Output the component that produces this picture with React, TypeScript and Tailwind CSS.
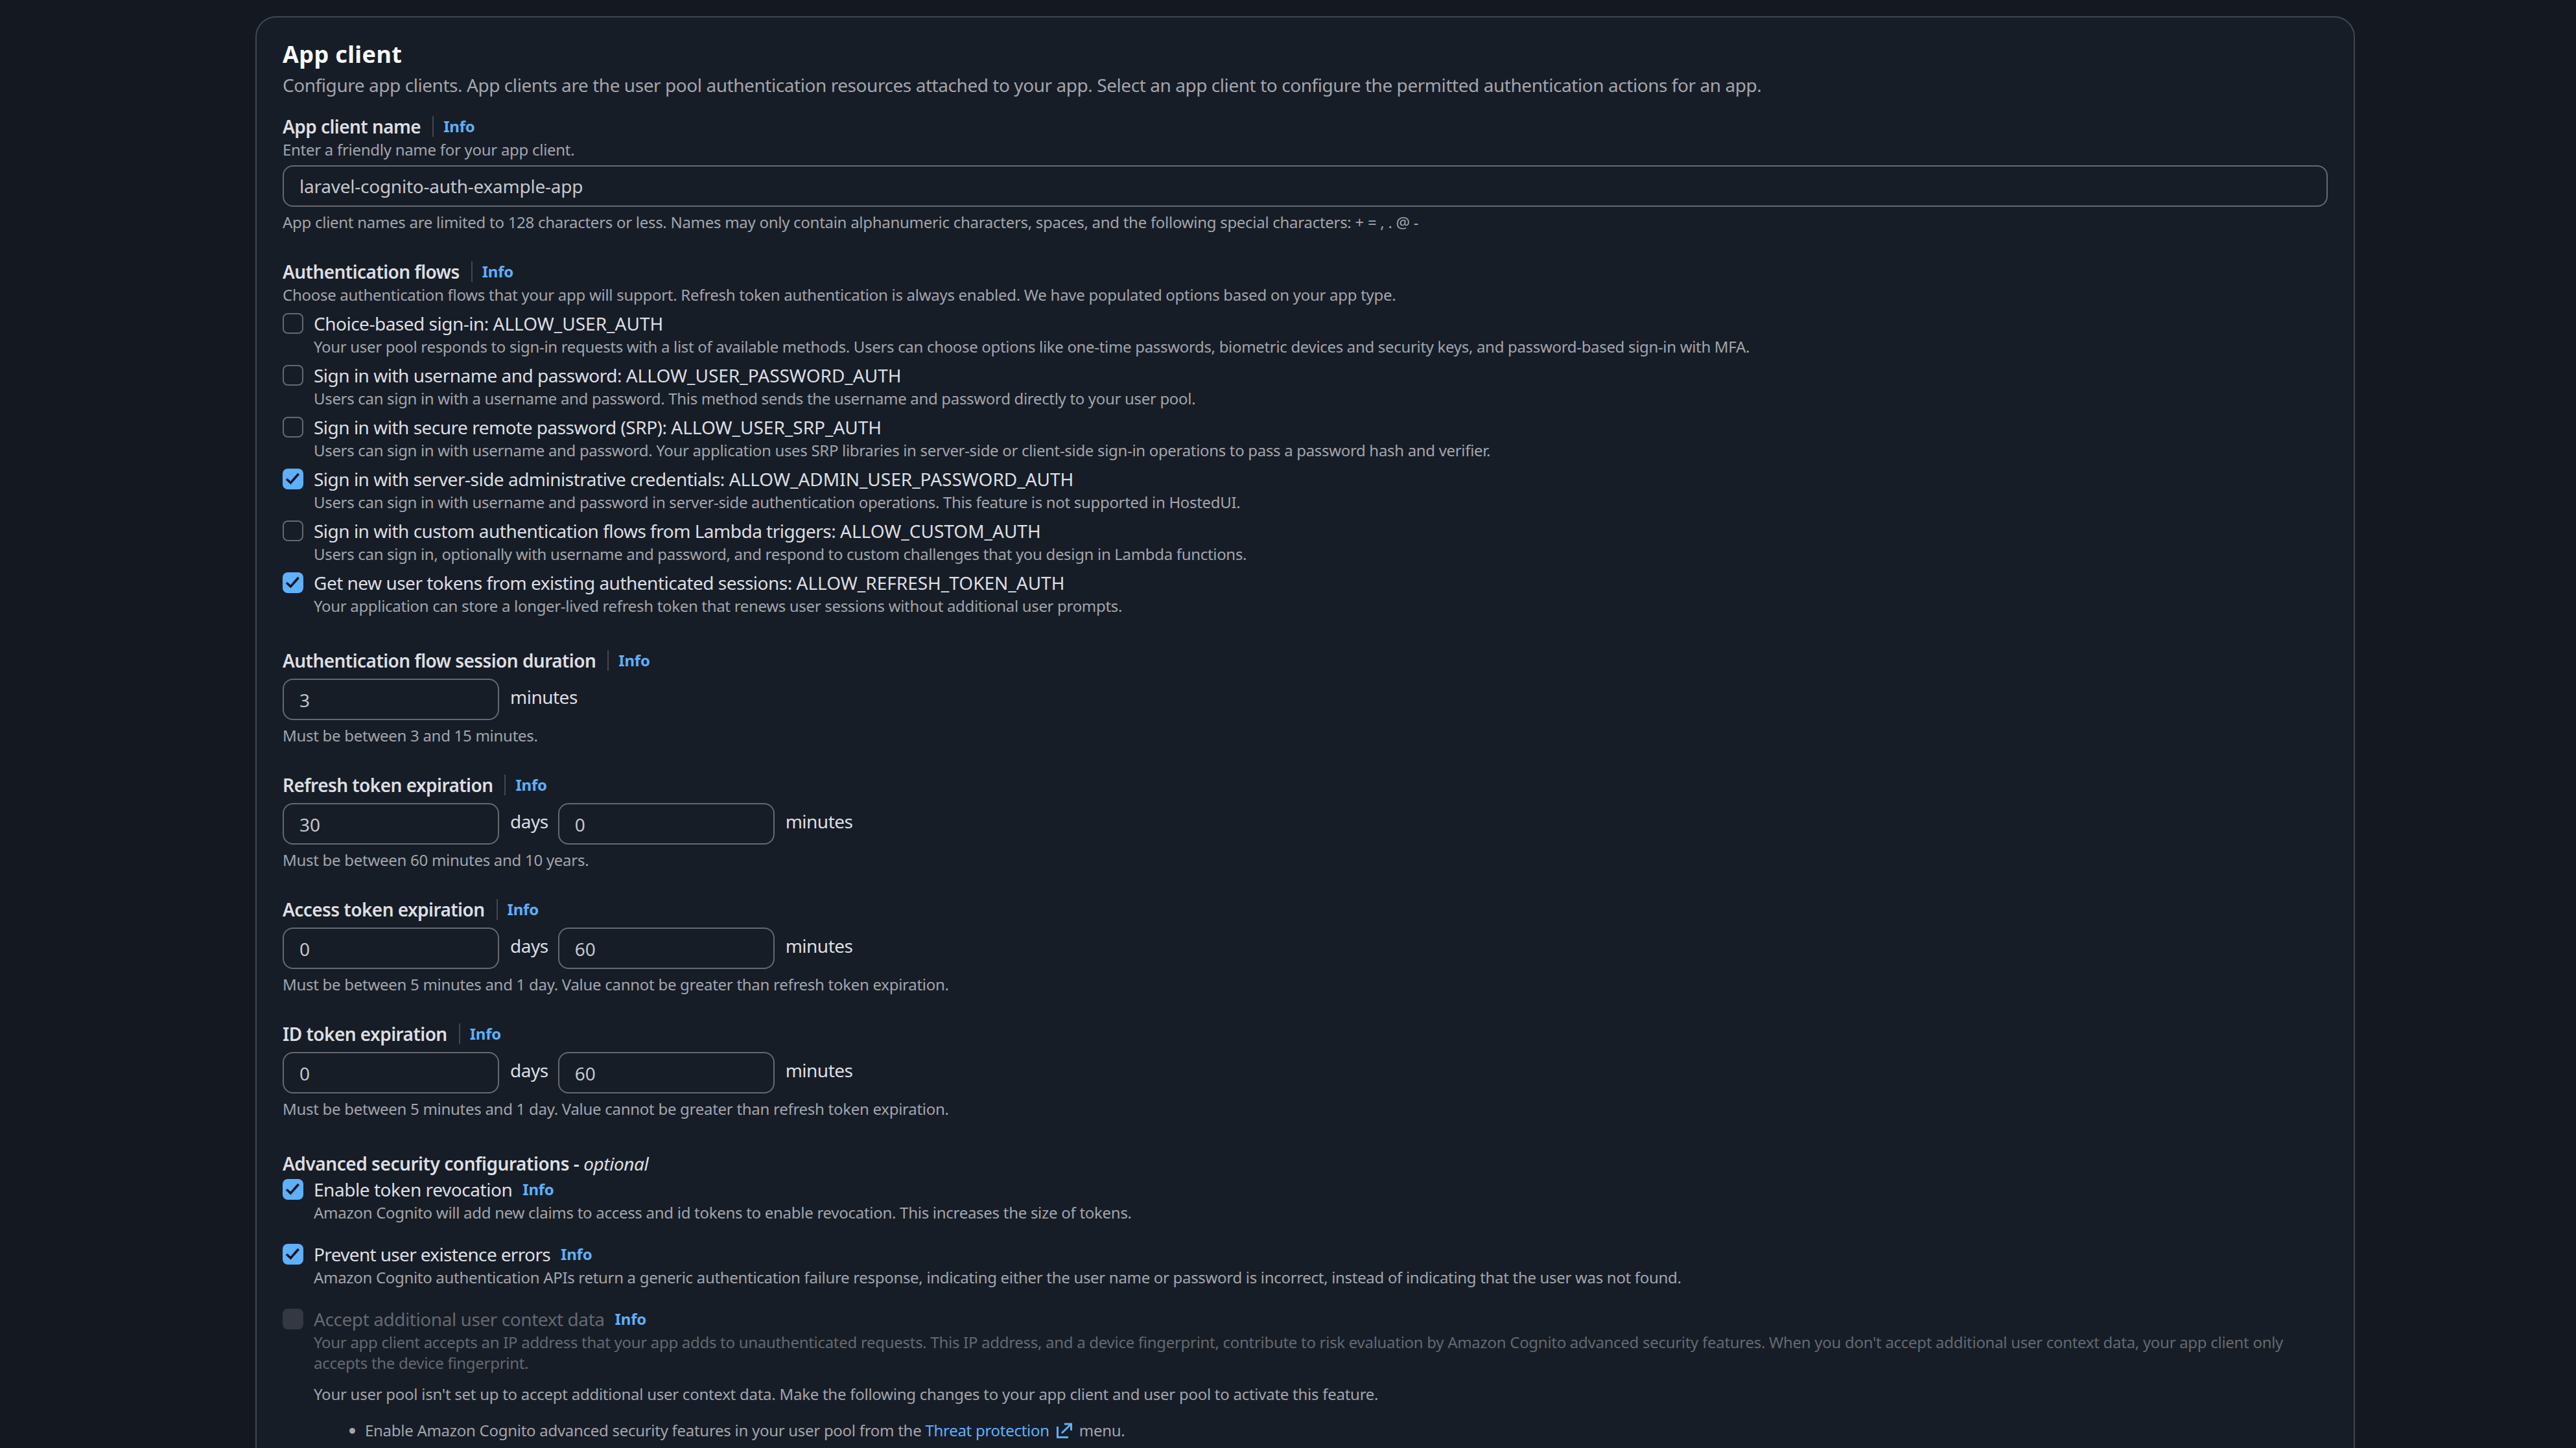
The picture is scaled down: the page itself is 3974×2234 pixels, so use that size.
const InfoLink = () => <a className="text-[24px] leading-[32px] font-bold tracking-[-0.2px] text-[#5eb0ff]">Info</a>;

const FieldLabel = ({ children }: { children: string }) => (
  <div className="flex h-[40px] items-center">
    <span className="text-[28px] leading-[40px] font-semibold tracking-[-0.55px] text-[#dedee3]">{children}</span>
    <span className="ml-[18px] mr-[15px] h-[32px] w-[2px] bg-[#424650]" />
    <InfoLink />
  </div>
);

const Checkbox = ({ checked, disabled }: { checked?: boolean; disabled?: boolean }) => {
  if (disabled) return <span className="mt-[4px] h-[32px] w-[32px] shrink-0 rounded-[8px] bg-[#333843]" />;
  if (!checked) return <span className="mt-[4px] h-[32px] w-[32px] shrink-0 rounded-[8px] border-2 border-[#656871]" />;
  return (
    <span className="mt-[4px] h-[32px] w-[32px] shrink-0 rounded-[8px] bg-[#5eb0ff]">
      <svg viewBox="0 0 16 16" className="h-[32px] w-[32px]" fill="none" stroke="#0f141a" strokeWidth="1.8">
        <path d="M3 8l3.200 3 6.100-7" />
      </svg>
    </span>
  );
};

const flows = [
  { name: "Choice-based sign-in:", flow: "ALLOW_USER_AUTH", desc: "Your user pool responds to sign-in requests with a list of available methods. Users can choose options like one-time passwords, biometric devices and security keys, and password-based sign-in with MFA." },
  { name: "Sign in with username and password:", flow: "ALLOW_USER_PASSWORD_AUTH", desc: "Users can sign in with a username and password. This method sends the username and password directly to your user pool." },
  { name: "Sign in with secure remote password (SRP):", flow: "ALLOW_USER_SRP_AUTH", desc: "Users can sign in with username and password. Your application uses SRP libraries in server-side or client-side sign-in operations to pass a password hash and verifier." },
  { name: "Sign in with server-side administrative credentials:", flow: "ALLOW_ADMIN_USER_PASSWORD_AUTH", desc: "Users can sign in with username and password in server-side authentication operations. This feature is not supported in HostedUI.", checked: true },
  { name: "Sign in with custom authentication flows from Lambda triggers:", flow: "ALLOW_CUSTOM_AUTH", desc: "Users can sign in, optionally with username and password, and respond to custom challenges that you design in Lambda functions." },
  { name: "Get new user tokens from existing authenticated sessions:", flow: "ALLOW_REFRESH_TOKEN_AUTH", desc: "Your application can store a longer-lived refresh token that renews user sessions without additional user prompts.", checked: true },
];

const NumberInput = ({ value }: { value: string }) => (
  <input
    readOnly
    value={value}
    className="h-[64px] w-[334px] rounded-[16px] border-2 border-[#656871] bg-transparent px-[24px] pt-[2px] text-[28px] text-[#c6c6cd] outline-none"
  />
);

const Unit = ({ children }: { children: string }) => (
  <span className="ml-[17px] text-[28px] leading-[56px] tracking-[-0.5px] text-[#dedee3]">{children}</span>
);

const TokenField = ({ label, days, minutes, hint }: { label: string; days: string; minutes: string; hint: string }) => (
  <div className="mt-[40px]">
    <FieldLabel>{label}</FieldLabel>
    <div className="mt-[8px] flex">
      <NumberInput value={days} />
      <Unit>days</Unit>
      <span className="ml-[15px] flex">
        <NumberInput value={minutes} />
      </span>
      <Unit>minutes</Unit>
    </div>
    <div className="mt-[8px] text-[24px] leading-[32px] tracking-[-0.28px] text-[#a4a4ad]">{hint}</div>
  </div>
);

export default function App() {
  return (
    <div className="h-[2234px] overflow-hidden bg-[#141820] pl-[394px] pr-[341px] pt-[25px] font-['Noto_Sans',sans-serif]">
      <div className="h-[2400px] rounded-[32px] border-2 border-[#424650] bg-[#161d26] px-[40px] pt-[35px]">
        <h2 className="text-[36px] leading-[44px] font-bold tracking-[0.38px] text-[#f9f9fa]">App client</h2>
        <p className="mt-[5px] text-[28px] leading-[40px] tracking-[-0.44px] text-[#a4a4ad]">
          Configure app clients. App clients are the user pool authentication resources attached to your app. Select an app client to configure the permitted authentication actions for an app.
        </p>

        <div className="mt-[24px]">
          <FieldLabel>App client name</FieldLabel>
          <div className="text-[24px] leading-[32px] tracking-[-0.28px] text-[#a4a4ad]">Enter a friendly name for your app client.</div>
          <input
            readOnly
            value="laravel-cognito-auth-example-app"
            className="mt-[8px] block h-[64px] w-full rounded-[16px] border-2 border-[#656871] bg-transparent px-[24px] text-[28px] tracking-[-0.24px] text-[#c6c6cd] outline-none"
          />
          <div className="mt-[8px] text-[24px] leading-[32px] tracking-[-0.28px] text-[#a4a4ad]">
            App client names are limited to 128 characters or less. Names may only contain alphanumeric characters, spaces, and the following special characters: + = , . @ -
          </div>
        </div>

        <div className="mt-[40px]">
          <FieldLabel>Authentication flows</FieldLabel>
          <div className="text-[24px] leading-[32px] tracking-[-0.28px] text-[#a4a4ad]">
            Choose authentication flows that your app will support. Refresh token authentication is always enabled. We have populated options based on your app type.
          </div>
          <div className="mt-[8px] flex flex-col gap-[8px]">
            {flows.map((item) => (
              <div key={item.flow} className="flex gap-[16px]">
                <Checkbox checked={item.checked} />
                <div>
                  <div className="text-[28px] leading-[40px] tracking-[-0.5px] text-[#dedee3]">
                    {item.name} <span className="tracking-normal">{item.flow}</span>
                  </div>
                  <div className="text-[24px] leading-[32px] tracking-[-0.32px] text-[#a4a4ad]">{item.desc}</div>
                </div>
              </div>
            ))}
          </div>
        </div>

        <div className="mt-[48px]">
          <FieldLabel>Authentication flow session duration</FieldLabel>
          <div className="mt-[8px] flex">
            <NumberInput value="3" />
            <Unit>minutes</Unit>
          </div>
          <div className="mt-[8px] text-[24px] leading-[32px] tracking-[-0.28px] text-[#a4a4ad]">Must be between 3 and 15 minutes.</div>
        </div>

        <TokenField label="Refresh token expiration" days="30" minutes="0" hint="Must be between 60 minutes and 10 years." />
        <TokenField label="Access token expiration" days="0" minutes="60" hint="Must be between 5 minutes and 1 day. Value cannot be greater than refresh token expiration." />
        <TokenField label="ID token expiration" days="0" minutes="60" hint="Must be between 5 minutes and 1 day. Value cannot be greater than refresh token expiration." />

        <div className="mt-[48px]">
          <div className="text-[28px] leading-[40px] font-semibold tracking-[-0.45px] text-[#dedee3]">
            Advanced security configurations - <span className="font-normal italic">optional</span>
          </div>

          <div className="flex gap-[16px]">
            <Checkbox checked />
            <div>
              <div className="flex items-center gap-[16px] text-[28px] leading-[40px] tracking-[-0.45px] text-[#dedee3]">
                Enable token revocation <InfoLink />
              </div>
              <div className="text-[24px] leading-[32px] tracking-[-0.28px] text-[#a4a4ad]">
                Amazon Cognito will add new claims to access and id tokens to enable revocation. This increases the size of tokens.
              </div>
            </div>
          </div>

          <div className="mt-[28px] flex gap-[16px]">
            <Checkbox checked />
            <div>
              <div className="flex items-center gap-[16px] text-[28px] leading-[40px] tracking-[-0.65px] text-[#dedee3]">
                Prevent user existence errors <InfoLink />
              </div>
              <div className="text-[24px] leading-[32px] tracking-[-0.31px] text-[#a4a4ad]">
                Amazon Cognito authentication APIs return a generic authentication failure response, indicating either the user name or password is incorrect, instead of indicating that the user was not found.
              </div>
            </div>
          </div>

          <div className="mt-[28px] flex gap-[16px]">
            <Checkbox disabled />
            <div>
              <div className="flex items-center gap-[16px] text-[28px] leading-[40px] tracking-[-0.43px] text-[#656871]">
                Accept additional user context data <InfoLink />
              </div>
              <div className="text-[24px] leading-[32px] tracking-[-0.29px] text-[#656871]">
                Your app client accepts an IP address that your app adds to unauthenticated requests. This IP address, and a device fingerprint, contribute to risk evaluation by Amazon Cognito advanced security features. When you don't accept additional user context data, your app client only accepts the device fingerprint.
              </div>
              <p className="mt-[16px] text-[24px] leading-[32px] tracking-[-0.26px] text-[#a4a4ad]">
                Your user pool isn't set up to accept additional user context data. Make the following changes to your app client and user pool to activate this feature.
              </p>
              <ul className="mt-[24px] list-disc pl-[79px] text-[24px] leading-[32px] tracking-[-0.28px] text-[#a4a4ad]">
                <li>
                  Enable Amazon Cognito advanced security features in your user pool from the{" "}
                  <a className="text-[#5eb0ff]">
                    Threat protection
                    <svg viewBox="0 0 24 24" className="ml-[11px] mr-[5px] inline h-[24px] w-[24px] align-[-3px]" fill="none" stroke="#5eb0ff" strokeWidth="3">
                      <path d="M1.500 6v16.500H18M12 2h10.500v10M22.500 2 8 16" />
                    </svg>
                  </a>{" "}
                  menu.
                </li>
              </ul>
            </div>
          </div>
        </div>
      </div>
    </div>
  );
}
